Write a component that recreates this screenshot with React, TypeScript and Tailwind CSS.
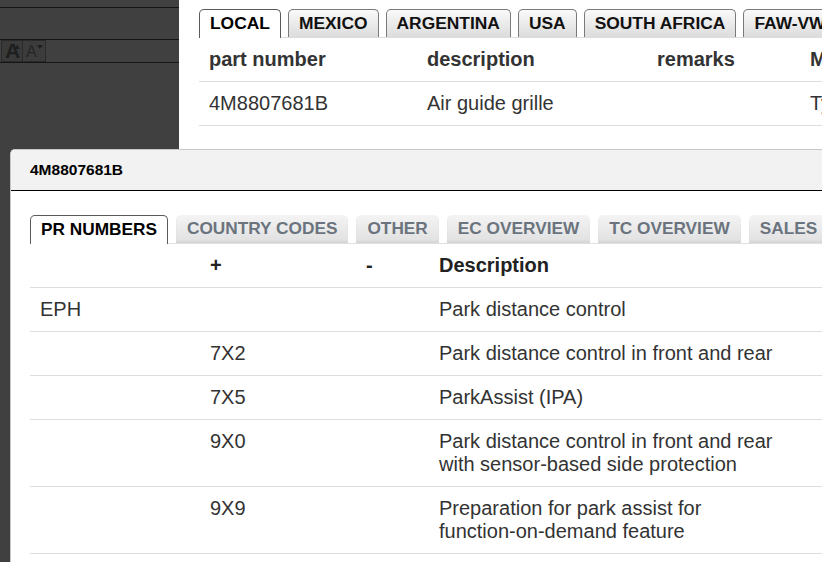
import React from 'react'

const topTabs = ['LOCAL', 'MEXICO', 'ARGENTINA', 'USA', 'SOUTH AFRICA', 'FAW-VW']
const modalTabs = ['PR NUMBERS', 'COUNTRY CODES', 'OTHER', 'EC OVERVIEW', 'TC OVERVIEW', 'SALES']

type PrRow = { code: string; plus: string; minus: string; desc: string[] }

const prRows: PrRow[] = [
  { code: 'EPH', plus: '', minus: '', desc: ['Park distance control'] },
  { code: '', plus: '7X2', minus: '', desc: ['Park distance control in front and rear'] },
  { code: '', plus: '7X5', minus: '', desc: ['ParkAssist (IPA)'] },
  { code: '', plus: '9X0', minus: '', desc: ['Park distance control in front and rear', 'with sensor-based side protection'] },
  { code: '', plus: '9X9', minus: '', desc: ['Preparation for park assist for', 'function-on-demand feature'] },
]

function Caret({ up }: { up: boolean }) {
  return (
    <svg width="6" height="4" viewBox="0 0 6 4" className="absolute right-[2px] top-[4px]">
      <path d={up ? 'M0 4 L3 0 L6 4 Z' : 'M0 0 L6 0 L3 4 Z'} fill="#1e1e1e" />
    </svg>
  )
}

function FontButtons() {
  return (
    <div className="flex h-[23px] items-stretch border-b border-[#161616] pl-[1px]">
      <div className="relative flex w-[22px] items-end justify-start border border-[#2a2a2a] bg-[#3a3a3a] pl-[3px]">
        <span className="text-[21px] font-bold leading-[20px] text-[#1e1e1e]">A</span>
        <Caret up />
      </div>
      <div className="relative flex w-[23px] items-end justify-start border-y border-r border-[#2a2a2a] bg-[#3c3c3c] pl-[3px]">
        <span className="text-[16px] leading-[18px] text-[#262626]">A</span>
        <Caret up={false} />
      </div>
    </div>
  )
}

function TopTab({ label, active }: { label: string; active: boolean }) {
  return (
    <div
      className={
        active
          ? 'relative -mb-px flex h-[29px] items-center rounded-t-[5px] border border-b-0 border-[#5a5a5a] bg-white px-[10px] pb-[1px] text-[17.4px] font-bold text-black'
          : 'flex h-[28px] items-center rounded-t-[5px] border border-b-0 border-[#7a7a7a] bg-gradient-to-b from-[#fafafa] to-[#dcdcdc] px-[10px] text-[17.4px] font-bold text-[#111]'
      }
    >
      {label}
    </div>
  )
}

function ModalTab({ label, active }: { label: string; active: boolean }) {
  return (
    <div
      className={
        active
          ? 'relative -mb-px flex h-[29px] shrink-0 items-center rounded-t-[5px] border border-b-0 border-[#5a5a5a] bg-white px-[10px] pb-[1px] text-[17.25px] font-bold text-black'
          : 'flex h-[28px] shrink-0 items-center rounded-t-[5px] bg-gradient-to-b from-[#f4f4f4] to-[#e0e0e0] px-[11px] text-[17.25px] font-bold text-[#6b747e] shadow-[inset_0_-2px_2px_rgba(0,0,0,0.05)]'
      }
    >
      {label}
    </div>
  )
}

const cell = 'border-b border-[#dedede] px-[10px] py-[10px]'

export default function App() {
  return (
    <div className="relative flex h-[562px] w-[822px] overflow-hidden bg-white font-['Liberation_Sans',Arial,sans-serif]">
      <div className="w-[179px] shrink-0 bg-[#404040]">
        <div className="h-[8px] border-b border-[#161616]" />
        <div className="h-[32px] border-b border-[#161616]" />
        <FontButtons />
      </div>

      <div className="min-w-0 flex-1 overflow-hidden pl-[20px] pt-[9px]">
        <div className="flex gap-[7px] border-b border-[#dcdcdc] whitespace-nowrap">
          {topTabs.map((t, i) => (
            <TopTab key={t} label={t} active={i === 0} />
          ))}
        </div>
        <div className="grid grid-cols-[218px_230px_153px_200px] whitespace-nowrap text-[20px] leading-[23px] text-[#333]">
          <div className={cell + ' font-bold'}>part number</div>
          <div className={cell + ' font-bold'}>description</div>
          <div className={cell + ' font-bold'}>remarks</div>
          <div className={cell + ' font-bold'}>Model</div>
          <div className={cell}>4M8807681B</div>
          <div className={cell}>Air guide grille</div>
          <div className={cell}></div>
          <div className={cell}>Type</div>
        </div>
      </div>

      {/* dialog over the page */}
      <div className="absolute left-[10px] top-[149px] bottom-0 right-[-60px] overflow-hidden rounded-tl-[5px] border-l border-t border-[#c8c8c8] bg-white">
        <div className="flex h-[41px] items-center border-b border-black bg-[#f2f2f2] pl-[19px] text-[15.5px] font-bold text-black">
          4M8807681B
        </div>
        <div className="pl-[19px] pt-[24px]">
          <div className="flex gap-[8px] border-b border-[#e0e0e0] whitespace-nowrap">
            {modalTabs.map((t, i) => (
              <ModalTab key={t} label={t} active={i === 0} />
            ))}
          </div>
          <div className="grid grid-cols-[170px_156px_73px_600px] text-[20px] leading-[23px] text-[#333]">
            <div className={cell} />
            <div className={cell + ' font-bold text-[#222]'}>+</div>
            <div className={cell + ' font-bold text-[#222]'}>-</div>
            <div className={cell + ' font-bold text-[#222]'}>Description</div>
            {prRows.map((r, i) => (
              <React.Fragment key={i}>
                <div className={cell}>{r.code}</div>
                <div className={cell}>{r.plus}</div>
                <div className={cell}>{r.minus}</div>
                <div className={cell}>
                  {r.desc.map((d) => (
                    <div key={d}>{d}</div>
                  ))}
                </div>
              </React.Fragment>
            ))}
          </div>
        </div>
      </div>
    </div>
  )
}
